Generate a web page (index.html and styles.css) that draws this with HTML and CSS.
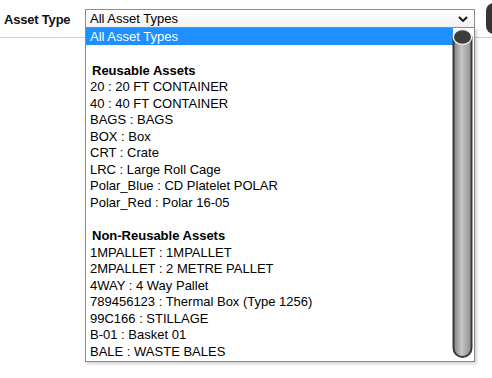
FILE: index.html
```html
<!DOCTYPE html>
<html>
<head>
<meta charset="utf-8">
<link rel="stylesheet" href="styles.css">
</head>
<body>
<div class="page">
  <div class="header">
    <div class="label">Asset Type</div>
    <div class="select">
      <span class="select-text">All Asset Types</span>
      <svg class="chevron" width="10" height="6" viewBox="0 0 10 6"><polyline points="1,1 5,5 9,1" fill="none" stroke="#111" stroke-width="1.8"/></svg>
    </div>
    <div class="side-btn"></div>
  </div>

  <div class="dropdown">
    <div class="list">
      <div class="opt selected">All Asset Types</div>
      <div class="opt"></div>
      <div class="group">Reusable Assets</div>
      <div class="opt">20 : 20 FT CONTAINER</div>
      <div class="opt">40 : 40 FT CONTAINER</div>
      <div class="opt">BAGS : BAGS</div>
      <div class="opt">BOX : Box</div>
      <div class="opt">CRT : Crate</div>
      <div class="opt">LRC : Large Roll Cage</div>
      <div class="opt">Polar_Blue : CD Platelet POLAR</div>
      <div class="opt">Polar_Red : Polar 16-05</div>
      <div class="opt"></div>
      <div class="group">Non-Reusable Assets</div>
      <div class="opt">1MPALLET : 1MPALLET</div>
      <div class="opt">2MPALLET : 2 METRE PALLET</div>
      <div class="opt">4WAY : 4 Way Pallet</div>
      <div class="opt">789456123 : Thermal Box (Type 1256)</div>
      <div class="opt">99C166 : STILLAGE</div>
      <div class="opt">B-01 : Basket 01</div>
      <div class="opt">BALE : WASTE BALES</div>
    </div>
    <svg class="scrollbar" width="21" height="332" viewBox="0 0 21 332">
      <defs>
        <linearGradient id="body" x1="0" y1="0" x2="1" y2="0">
          <stop offset="0" stop-color="#7e7e7e"/>
          <stop offset="0.45" stop-color="#c6c6c6"/>
          <stop offset="1" stop-color="#8c8c8c"/>
        </linearGradient>
      </defs>
      <path d="M1.5 9 L1.5 320 A9 9 0 0 0 19.5 320 L19.5 9 Z" fill="url(#body)" stroke="#3a3a3a" stroke-width="2"/>
      <ellipse cx="10.5" cy="9" rx="9.2" ry="7.4" fill="#3d3d3d" stroke="#f2f2f2" stroke-width="1.4"/>
    </svg>
  </div>
</div>
</body>
</html>
```

FILE: styles.css
```css
html, body {
  margin: 0;
  padding: 0;
  background: #ffffff;
}
body {
  width: 492px;
  height: 378px;
  overflow: hidden;
  font-family: "Liberation Sans", Arial, sans-serif;
  color: #000;
}
.page {
  position: relative;
  width: 492px;
  height: 378px;
  overflow: hidden;
}
.header {
  display: flex;
  align-items: flex-start;
  height: 37px;
  border-bottom: 1px solid #d0d0d0;
  padding-left: 4px;
}
.label {
  flex-shrink: 0;
  width: 81px;
  font-family: "Liberation Sans", Arial, sans-serif;
  font-weight: bold;
  font-size: 13px;
  letter-spacing: -0.2px;
  margin-top: 12px;
  color: #111;
}
.select {
  flex-shrink: 0;
  box-sizing: border-box;
  width: 390px;
  height: 19px;
  margin-top: 9px;
  border: 1px solid #8e8e8e;
  background: linear-gradient(#ffffff, #f2f2f2);
  display: flex;
  align-items: center;
  padding-left: 4px;
  padding-right: 4px;
  font-size: 13px;
}
.select-text {
  flex: 1;
  line-height: 17px;
}
.chevron {
  margin-right: 2px;
}
.side-btn {
  flex-shrink: 0;
  margin-left: 11px;
  margin-top: 3px;
  width: 24px;
  height: 31px;
  border-radius: 8px;
  background: #353535;
}
.dropdown {
  position: absolute;
  left: 85px;
  top: 27px;
  width: 390px;
  height: 335px;
  box-sizing: border-box;
  border: 1px solid #8a8a8a;
  background: #fff;
  box-shadow: 2px 2px 3px rgba(0, 0, 0, 0.18);
  overflow: hidden;
}
.list {
  font-size: 13px;
}
.opt, .group {
  height: 16.55px;
  line-height: 18.5px;
  padding-left: 4px;
  white-space: nowrap;
}
.group {
  font-weight: bold;
  padding-left: 6px;
}
.opt.selected {
  height: 17px;
  background: #1e90ff;
  color: #fff;
  margin-right: 21px;
}
.scrollbar {
  position: absolute;
  right: 1px;
  top: 0;
}
```
